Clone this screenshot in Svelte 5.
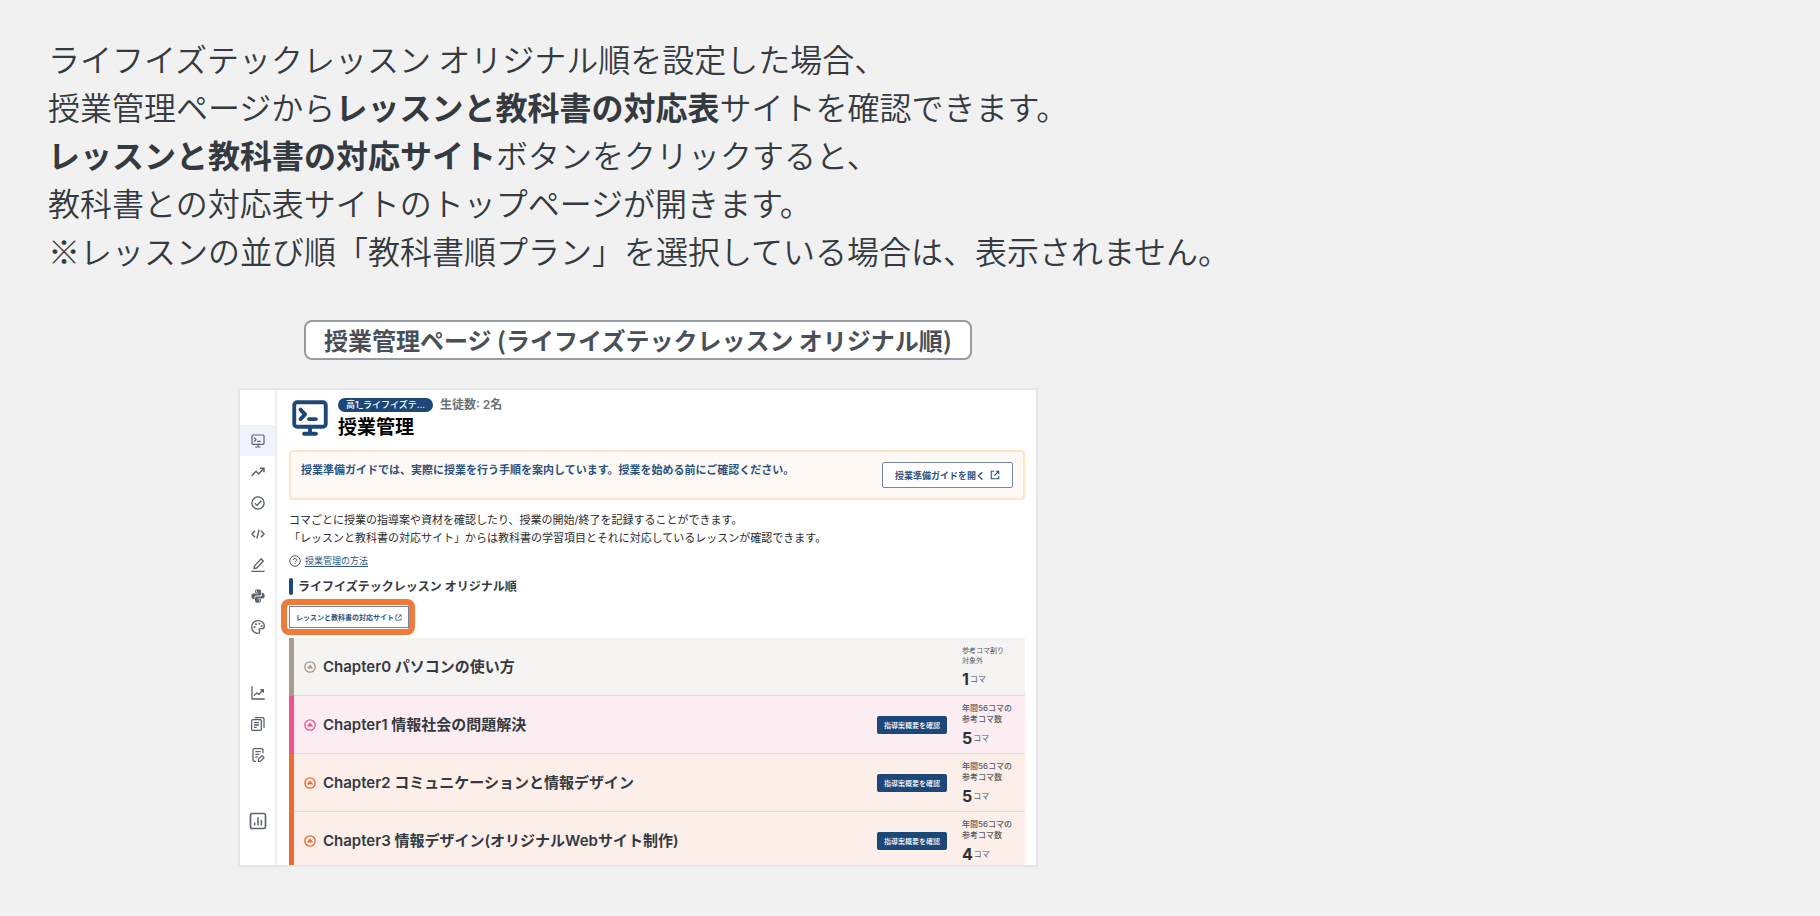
<script>
  const navGroups = [
    [
      { icon: 'monitor', label: '授業管理', active: true },
      { icon: 'trend', label: '進捗' },
      { icon: 'check', label: '確認' },
      { icon: 'code', label: 'コード' },
      { icon: 'pen', label: '編集' },
      { icon: 'python', label: 'Python' },
      { icon: 'palette', label: 'デザイン' }
    ],
    [
      { icon: 'chart', label: 'グラフ' },
      { icon: 'docs', label: '資料' },
      { icon: 'note', label: 'ノート' }
    ],
    [{ icon: 'bars', label: '集計' }]
  ];

  const chapters = [
    { tone: 'sand', title: 'Chapter0 パソコンの使い方', note: ['参考コマ割り', '対象外'], count: 1, small: true },
    { tone: 'pink', title: 'Chapter1 情報社会の問題解決', note: ['年間56コマの', '参考コマ数'], count: 5, guide: true },
    { tone: 'orange', title: 'Chapter2 コミュニケーションと情報デザイン', note: ['年間56コマの', '参考コマ数'], count: 5, guide: true },
    { tone: 'orange', title: 'Chapter3 情報デザイン(オリジナルWebサイト制作)', note: ['年間56コマの', '参考コマ数'], count: 4, guide: true }
  ];
</script>

{#snippet monitor(weight)}
  <g fill="none" stroke="currentColor" stroke-width={weight} stroke-linecap="round" stroke-linejoin="round">
    <rect x="3" y="3" width="18" height="14" rx="1.6" />
    <path d="M12 17v4M8.6 21h6.8M6.6 7.2l2.6 2.7-2.6 2.7M11.4 12.6h4" />
  </g>
{/snippet}

{#snippet external()}
  <svg class="external" viewBox="0 0 24 24" aria-hidden="true">
    <path d="M10 3H3v18h18v-7M14 3h7v7M21 3L10.500 13.500" fill="none" stroke="currentColor" stroke-width="2.600" />
  </svg>
{/snippet}

{#snippet navIcon(name)}
  <svg class="nav-icon" viewBox="0 0 24 24" aria-hidden="true">
    {#if name === 'monitor'}
      {@render monitor(1.8)}
    {:else if name === 'trend'}
      <path d="M2.500 18l6.500-7 4 4 7-8M15 6.500h6v6" fill="none" stroke="currentColor" stroke-width="2.200" />
    {:else if name === 'check'}
      <g fill="none" stroke="currentColor" stroke-width="2">
        <circle cx="12" cy="12" r="9.200" />
        <path d="M7.300 12.300l3.300 3.300 6.300-7" />
      </g>
    {:else if name === 'code'}
      <path d="M7.500 7L3 12l4.500 5M16.500 7l4.500 5-4.500 5M13.700 5.500l-3.400 13" fill="none" stroke="currentColor" stroke-width="2.200" />
    {:else if name === 'pen'}
      <path d="M6 17.500l.8-4.200L16.500 2.800l3.400 3.200-9.700 10.500zM2 21.500h20" fill="none" stroke="currentColor" stroke-width="2.100" stroke-linejoin="round" />
    {:else if name === 'python'}
      <g fill="currentColor">
        <path fill-rule="evenodd" d="M12 2C8.500 2 7.500 3.300 7.500 5v2.300h5v1H5C3 8.300 2 10 2 12.300S3 16.500 5 16.500h1.700V14c0-1.700 1.300-2.800 3-2.800h4.800c1.400 0 2.300-1 2.300-2.400V5c0-2-1.700-3-4.800-3zM9.700 3.700a1 1 0 110 2 1 1 0 010-2z" />
        <path fill-rule="evenodd" d="M12 22c3.500 0 4.500-1.300 4.500-3v-2.300h-5v-1H19c2 0 3-1.700 3-4S21 7.500 19 7.500h-1.200V10c0 1.700-1.300 2.800-3 2.800H10c-1.700 0-2.500 1-2.500 2.400V19c0 2 1.400 3 4.500 3zM14.300 18.300a1 1 0 110 2 1 1 0 010-2z" />
      </g>
    {:else if name === 'palette'}
      <path d="M12 2.500a9.500 9.500 0 000 19c1.700 0 2.600-1 2.600-2.300 0-1.600-1-1.900-1-3 0-1 .8-1.700 1.900-1.700h2.400c2.200 0 3.600-1.600 3.600-3.700C21.500 6.200 17.300 2.500 12 2.500z" fill="none" stroke="currentColor" stroke-width="2" />
      <g fill="currentColor">
        <circle cx="6.800" cy="12" r="1.500" /><circle cx="9" cy="7.700" r="1.500" />
        <circle cx="14" cy="7" r="1.500" /><circle cx="17.600" cy="10.500" r="1.500" />
      </g>
    {:else if name === 'chart'}
      <path d="M3 2v19h19M6 16l4-4 3.500 2L19 7.500M15.500 7H20v4.500" fill="none" stroke="currentColor" stroke-width="1.900" />
    {:else if name === 'docs'}
      <g fill="none" stroke="currentColor" stroke-width="1.900" stroke-linejoin="round">
        <rect x="2.500" y="5.500" width="14.500" height="16" rx="1.500" />
        <path d="M7 2.500h12a2 2 0 012 2V18M6 10h7.500M6 13.500h7.500M6 17h4" />
      </g>
    {:else if name === 'note'}
      <g fill="none" stroke="currentColor" stroke-width="1.900" stroke-linejoin="round">
        <path d="M19.500 9V4.500a2 2 0 00-2-2h-11a2 2 0 00-2 2v15a2 2 0 002 2H9M8 7h8M8 11h6M8 15h3" />
        <path d="M12.500 21.500v-3.300l5.700-5 2.800 3-5.500 5.300z" />
      </g>
    {:else}
      <rect x="2" y="2" width="20" height="20" rx="2" fill="none" stroke="currentColor" stroke-width="2.200" />
      <path d="M7.500 18v-4M12 18V7M16.500 18v-7.500" stroke="currentColor" stroke-width="2" />
    {/if}
  </svg>
{/snippet}

<main class="page">
  <p class="intro">
    ライフイズテックレッスン オリジナル順を設定した場合、<br />
    授業管理ページから<strong>レッスンと教科書の対応表</strong>サイトを確認できます。<br />
    <strong>レッスンと教科書の対応サイト</strong>ボタンをクリックすると、<br />
    教科書との対応表サイトのトップページが開きます。<br />
    ※レッスンの並び順「教科書順プラン」を選択している場合は、表示されません。
  </p>

  <figure>
    <figcaption>授業管理ページ (ライフイズテックレッスン オリジナル順)</figcaption>

    <div class="window">
      <nav class="sidebar">
        {#each navGroups as group}
          <div class="nav-group">
            {#each group as item}
              <button class="nav-item" class:active={item.active} class:large={item.icon === 'bars'} aria-label={item.label}>
                {@render navIcon(item.icon)}
              </button>
            {/each}
          </div>
        {/each}
      </nav>

      <section class="content">
        <header class="heading">
          <svg class="heading-icon" viewBox="0 0 24 24" aria-hidden="true">{@render monitor(2.2)}</svg>
          <div>
            <div class="meta">
              <span class="badge">高1_ライフイズテ…</span>
              <span class="students">生徒数: 2名</span>
            </div>
            <h1>授業管理</h1>
          </div>
        </header>

        <div class="notice">
          <p>授業準備ガイドでは、実際に授業を行う手順を案内しています。授業を始める前にご確認ください。</p>
          <button class="outline">授業準備ガイドを開く {@render external()}</button>
        </div>

        <p class="lead">
          コマごとに授業の指導案や資材を確認したり、授業の開始/終了を記録することができます。<br />
          「レッスンと教科書の対応サイト」からは教科書の学習項目とそれに対応しているレッスンが確認できます。
        </p>

        <div class="help">
          <svg viewBox="0 0 24 24" aria-hidden="true">
            <g fill="none" stroke="currentColor" stroke-width="2">
              <circle cx="12" cy="12" r="10.500" />
              <path d="M8.800 9.800c0-4.300 6.600-4 6.600-.2 0 2.400-3.300 2.400-3.300 5M12.100 16.300v2.200" />
            </g>
          </svg>
          <a href="#help">授業管理の方法</a>
        </div>

        <h2>ライフイズテックレッスン オリジナル順</h2>

        <div class="highlight">
          <button class="outline compact">レッスンと教科書の対応サイト{@render external()}</button>
        </div>

        <ul class="chapters">
          {#each chapters as chapter}
            <li class="chapter {chapter.tone}">
              <button class="toggle" aria-label="開閉">
                <svg viewBox="0 0 24 24" aria-hidden="true">
                  <circle cx="12" cy="12" r="10.300" fill="none" stroke="currentColor" stroke-width="2.800" />
                  <path d="M12 7l5.500 6.500a1 1 0 01-1 1.500h-9a1 1 0 01-1-1.500z" fill="currentColor" />
                </svg>
              </button>
              <h3>{chapter.title}</h3>
              {#if chapter.guide}
                <button class="guide">指導案概要を確認</button>
              {/if}
              <div class="quota" class:small={chapter.small}>
                <p class="note">{chapter.note[0]}<br />{chapter.note[1]}</p>
                <p class="count"><b>{chapter.count}</b>コマ</p>
              </div>
            </li>
          {/each}
        </ul>
      </section>
    </div>
  </figure>
</main>

<style>
  :global(body) {
    margin: 0;
    background: #f1f1f1;
  }

  .page {
    padding: 34px 48px 48px;
    color: #343a40;
    font-family: Inter, 'Noto Sans CJK JP', sans-serif;
  }

  p, h1, h2, h3, ul, figure {
    margin: 0;
    padding: 0;
  }

  button {
    margin: 0;
    padding: 0;
    border: 0;
    background: none;
    font-family: inherit;
    color: inherit;
    cursor: pointer;
  }

  svg {
    display: block;
    flex: none;
    overflow: visible;
  }

  .intro {
    font-family: 'Noto Sans CJK JP', sans-serif;
    font-size: 32px;
    font-weight: 350;
    line-height: 48px;
  }

  .intro strong {
    font-weight: 700;
  }

  figure {
    display: flex;
    flex-direction: column;
    align-items: center;
    gap: 28px;
    max-width: 1180px;
    margin-top: 46px;
  }

  figcaption {
    padding: 0 18px;
    border: 2px solid #959ba1;
    border-radius: 8px;
    background: #fff;
    color: #495057;
    font-family: 'Noto Sans CJK JP', sans-serif;
    font-size: 24px;
    font-weight: 600;
    line-height: 36px;
  }

  .window {
    box-sizing: border-box;
    display: flex;
    width: 100%;
    max-width: 800px;
    aspect-ratio: 800 / 479;
    overflow: hidden;
    border: 2px solid #e5e6e7;
    background: #fff;
  }

  .sidebar {
    display: flex;
    flex: none;
    flex-direction: column;
    gap: 35px;
    width: 35px;
    padding-top: 35px;
    box-shadow: 1px 0 3px rgb(0 0 0 / 12%);
    color: #5b626b;
  }

  .nav-item {
    display: flex;
    align-items: center;
    justify-content: center;
    width: 100%;
    height: 31px;
  }

  .nav-item.active {
    background: #eef3fc;
  }

  .nav-icon {
    width: 16px;
    height: 16px;
  }

  .large .nav-icon {
    width: 18px;
    height: 18px;
  }

  .content {
    flex: 1;
    min-width: 0;
    height: max-content;
    padding: 7px 11px 0 14px;
  }

  .heading {
    display: flex;
    gap: 7px;
    height: 42px;
  }

  .heading-icon {
    width: 42px;
    height: 42px;
    color: #1c4777;
  }

  .meta {
    display: flex;
    align-items: center;
    gap: 7px;
    padding-top: 1px;
    line-height: 14px;
  }

  .badge {
    padding: 0 8px;
    border-radius: 7px;
    background: #1c4777;
    color: #fff;
    font-size: 9px;
    font-weight: 500;
  }

  .students {
    color: #6b7075;
    font-size: 12px;
    font-weight: 600;
  }

  h1 {
    color: #000;
    font-size: 19px;
    font-weight: 600;
    line-height: 32px;
  }

  .notice {
    display: flex;
    align-items: flex-start;
    justify-content: space-between;
    margin-top: 11px;
    padding: 10px;
    border: 2px solid #fde5c8;
    border-radius: 4px;
    background: #fef9f5;
    color: #2a5280;
  }

  .notice p {
    font-size: 11px;
    font-weight: 600;
    line-height: 16px;
  }

  .outline {
    display: flex;
    align-items: center;
    gap: 5px;
    box-sizing: border-box;
    height: 26px;
    padding: 0 12px;
    border: 1px solid #7088a8;
    border-radius: 2px;
    background: #fff;
    color: #2a5280;
    font-size: 9px;
    font-weight: 600;
    white-space: nowrap;
  }

  .external {
    width: 10px;
    height: 10px;
  }

  .lead {
    margin-top: 11px;
    color: #2b2b2b;
    font-size: 11px;
    line-height: 18px;
  }

  .help {
    display: flex;
    align-items: center;
    gap: 4px;
    margin-top: 6px;
    color: #555;
    font-size: 9px;
    line-height: 16px;
  }

  .help svg {
    width: 12px;
    height: 12px;
  }

  .help a {
    color: #2f567f;
    text-underline-offset: 2px;
  }

  h2 {
    display: flex;
    align-items: center;
    gap: 5px;
    margin-top: 9px;
    font-size: 12px;
    font-weight: 600;
    line-height: 17px;
  }

  h2::before {
    width: 4px;
    height: 17px;
    border-radius: 2px;
    background: #1c4777;
    content: '';
  }

  .highlight {
    width: max-content;
    margin: 4px 0 3px -8px;
    padding: 1px 0 1px 2px;
    border: 6px solid #f17a38;
    border-radius: 8px;
  }

  .compact {
    gap: 1px;
    height: 22px;
    padding: 0 6px;
    border-radius: 0;
    font-size: 7px;
  }

  .compact .external {
    width: 7px;
    height: 7px;
  }

  .chapters {
    list-style: none;
  }

  .chapter {
    display: flex;
    align-items: center;
    box-sizing: border-box;
    height: 58px;
    padding-left: 10px;
    border-left: 5px solid var(--tone);
    background: var(--tint);
    box-shadow: inset 0 -1px #dfdadf;
  }

  .sand {
    --tone: #a89b8d;
    --tint: #f5f4f2;
  }

  .pink {
    --tone: #f05390;
    --tint: #fcedf3;
  }

  .orange {
    --tone: #ea6c33;
    --tint: #fceee9;
  }

  .toggle {
    color: var(--tone);
  }

  .toggle svg {
    width: 12px;
    height: 12px;
  }

  h3 {
    flex: 1;
    margin-left: 7px;
    font-size: 15px;
    font-weight: 600;
    line-height: 24px;
  }

  .guide {
    width: 70px;
    height: 18px;
    border-radius: 2px;
    background: #1c4777;
    color: #fff;
    font-size: 7px;
    font-weight: 500;
  }

  .quota {
    width: 63px;
    margin-left: 15px;
    color: #555b61;
  }

  .note {
    font-size: 8px;
    font-weight: 500;
    line-height: 11px;
  }

  .small .note {
    font-size: 7px;
    font-weight: 400;
    line-height: 10px;
  }

  .count {
    display: flex;
    align-items: center;
    gap: 1px;
    margin-top: 3px;
    font-size: 8px;
    line-height: 20px;
  }

  .count b {
    color: #2d3136;
    font-size: 16px;
    font-weight: 700;
  }
</style>
